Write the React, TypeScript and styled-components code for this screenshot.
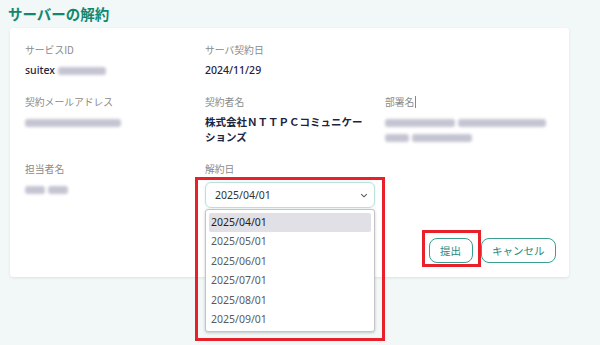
import styled, { createGlobalStyle } from "styled-components";

const GlobalStyle = createGlobalStyle`
  html, body {
    margin: 0;
    padding: 0;
    background: #f2f7f7;
  }
  body {
    font-family: "Noto Sans", "Noto Sans CJK JP", sans-serif;
  }
`;

const dates = [
  "2025/04/01",
  "2025/05/01",
  "2025/06/01",
  "2025/07/01",
  "2025/08/01",
  "2025/09/01",
];

export default function App() {
  return (
    <>
      <GlobalStyle />
      <Page>
        <Title>サーバーの解約</Title>
        <Card>
          <Fields>
            <Field>
              <Label>サービスID</Label>
              <Value>
                suitex <Blur w={48} />
              </Value>
            </Field>
            <Field>
              <Label>サーバ契約日</Label>
              <Value>2024/11/29</Value>
            </Field>
            <Field />

            <Field>
              <Label>契約メールアドレス</Label>
              <Value>
                <Blur w={96} />
              </Value>
            </Field>
            <Field>
              <Label>契約者名</Label>
              <Value bold>株式会社ＮＴＴＰＣコミュニケーションズ</Value>
            </Field>
            <Field>
              <Label>
                部署名<Caret />
              </Label>
              <Value>
                <Blur w={70} /> <Blur w={88} />
                <br />
                <Blur w={24} /> <Blur w={60} />
              </Value>
            </Field>

            <Field>
              <Label>担当者名</Label>
              <Value>
                <Blur w={20} /> <Blur w={20} />
              </Value>
            </Field>
            <Field>
              <Label>解約日</Label>
              <SelectWrap>
                <Select>
                  <span>2025/04/01</span>
                  <Chevron viewBox="0 0 10 6">
                    <path d="M1.5 1.2 L5 4.6 L8.5 1.2" />
                  </Chevron>
                </Select>
                <Menu>
                  {dates.map((d, i) => (
                    <Option key={d} active={i === 0}>
                      {d}
                    </Option>
                  ))}
                </Menu>
              </SelectWrap>
            </Field>
            <Field />
          </Fields>

          <Actions>
            <Marked>
              <Button>提出</Button>
            </Marked>
            <Button>キャンセル</Button>
          </Actions>
        </Card>
      </Page>
    </>
  );
}

const Page = styled.div`
  padding: 3px 31px 0 10px;
  height: 345px;
  box-sizing: border-box;
`;

const Title = styled.h1`
  margin: 0 0 4px -2px;
  font-family: "Noto Sans CJK JP", sans-serif;
  font-size: 14.5px;
  line-height: 21px;
  font-weight: 700;
  color: #12876f;
`;

const Card = styled.div`
  background: #fff;
  border-radius: 3px;
  box-shadow: 0 1px 3px rgba(0, 0, 0, 0.09);
  padding: 15px 13px 14px 15px;
`;

const Fields = styled.div`
  display: grid;
  grid-template-columns: 165px 165px 1fr;
  column-gap: 15px;
  row-gap: 17px;
`;

const Field = styled.div`
  display: flex;
  flex-direction: column;
  gap: 6px;
`;

const Label = styled.div`
  font-family: "Noto Sans CJK JP", sans-serif;
  font-size: 9.8px;
  line-height: 14px;
  color: #8a8a8a;
  display: flex;
  align-items: center;
`;

const Caret = styled.span`
  display: inline-block;
  width: 1px;
  height: 12px;
  margin-left: 1px;
  background: #7a88a8;
`;

const Value = styled.div<{ bold?: boolean }>`
  font-family: "Noto Sans", "Noto Sans CJK JP", sans-serif;
  font-size: 10.5px;
  line-height: 15px;
  font-weight: ${(p) => (p.bold ? 700 : 500)};
  color: #1d2340;
`;

const Blur = styled.span<{ w: number }>`
  display: inline-block;
  vertical-align: middle;
  width: ${(p) => p.w}px;
  height: 8px;
  border-radius: 3px;
  background: #c4c5d2;
  filter: blur(1.8px);
`;

const SelectWrap = styled.div`
  position: relative;
  width: 170px;

  &::after {
    content: "";
    position: absolute;
    left: -10px;
    right: -10px;
    top: -5px;
    height: 164px;
    border: 3px solid #e8202a;
    box-sizing: border-box;
    pointer-events: none;
  }
`;

const Select = styled.div`
  height: 26px;
  box-sizing: border-box;
  border: 1px solid #b9e2dc;
  border-radius: 6px;
  box-shadow: 0 0 2px rgba(120, 200, 190, 0.35);
  padding: 0 6px 0 9px;
  display: flex;
  align-items: center;
  justify-content: space-between;
  font-size: 10.5px;
  color: #333;
`;

const Chevron = styled.svg`
  width: 8px;
  height: 5px;
  fill: none;
  stroke: #555;
  stroke-width: 1.3;
`;

const Menu = styled.div`
  position: absolute;
  top: 27px;
  left: 0;
  width: 170px;
  box-sizing: border-box;
  background: #fff;
  border: 1px solid #c4c4c4;
  border-radius: 3px;
  box-shadow: 0 1px 3px rgba(0, 0, 0, 0.2);
  padding: 3px 3px 2px;
  z-index: 2;
`;

const Option = styled.div<{ active?: boolean }>`
  height: 19.4px;
  line-height: 19.4px;
  padding-left: 2px;
  border-radius: 2px;
  font-size: 10.5px;
  color: ${(p) => (p.active ? "#222" : "#5a5a5a")};
  background: ${(p) => (p.active ? "#e1e0e6" : "transparent")};
`;

const Actions = styled.div`
  margin-top: 30px;
  display: flex;
  justify-content: flex-end;
  gap: 8px;
`;

const Marked = styled.div`
  position: relative;

  &::after {
    content: "";
    position: absolute;
    left: -7px;
    right: -8px;
    top: -8px;
    bottom: -4px;
    border: 3px solid #e8202a;
    pointer-events: none;
  }
`;

const Button = styled.button`
  height: 25px;
  padding: 0 10.5px;
  border: 1px solid #3a9e92;
  border-radius: 8px;
  background: #fff;
  color: #2a8a80;
  font-family: "Noto Sans CJK JP", sans-serif;
  font-size: 10.5px;
  display: flex;
  align-items: center;
  cursor: pointer;
`;
